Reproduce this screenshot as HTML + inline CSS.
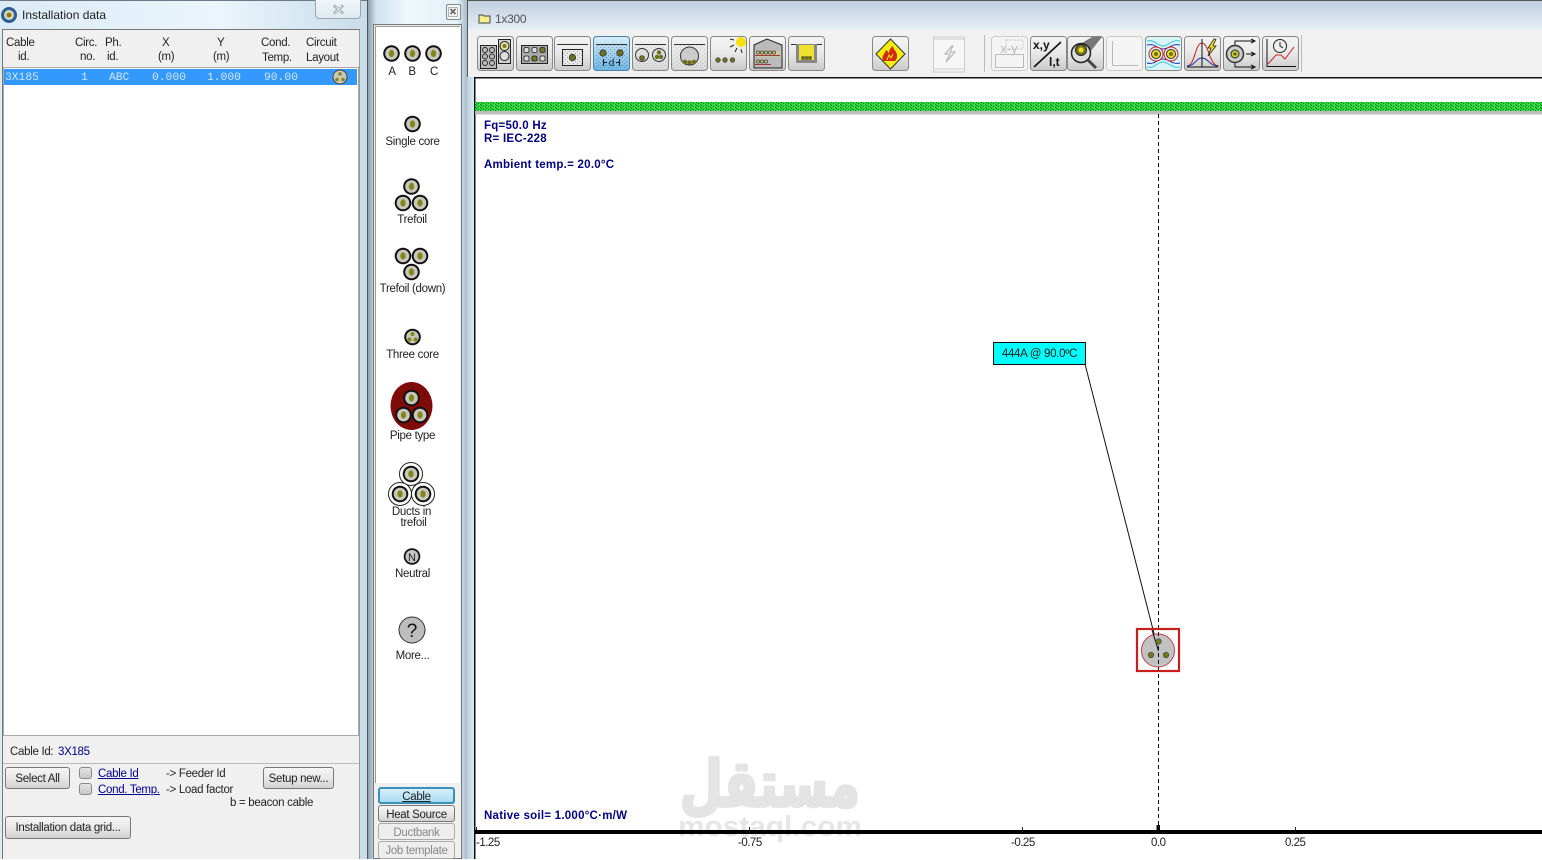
<!DOCTYPE html>
<html><head><meta charset="utf-8"><style>
html,body{margin:0;padding:0}
body{width:1542px;height:859px;overflow:hidden;position:relative;background:#fff;font-family:"Liberation Sans",sans-serif;font-size:11.5px;letter-spacing:-.3px;color:#222}
.a{position:absolute;white-space:nowrap}
.c{text-align:center}
.box{position:absolute;box-sizing:border-box}
.btn{position:absolute;box-sizing:border-box;border:1px solid #777;border-radius:3px;background:linear-gradient(#f6f6f6,#e8e8e8 50%,#d2d2d2);text-align:center;white-space:nowrap}
.cb{position:absolute;box-sizing:border-box;width:13px;height:12px;border:1px solid #888;border-radius:3px;background:linear-gradient(#e4e4e4,#c8c8c8)}
.m{font-family:"Liberation Mono",monospace;font-size:11.3px;letter-spacing:0;color:#cfe6ff}
.lnk{color:#000090;text-decoration:underline}
.b{font-weight:bold;color:#000080;font-size:11.5px;letter-spacing:.25px}
.ax{top:837px;font-size:11.5px;letter-spacing:-.5px;color:#222}
</style></head><body>

<!-- left window -->
<div class="box" style="left:0;top:0;width:367px;height:859px;background:linear-gradient(90deg,#dcebf6,#eaf5fc 60%,#c9dcea)"></div>
<div class="box" style="left:0;top:0;width:367px;height:1px;background:#6b7a88"></div>
<div class="box" style="left:315px;top:-2px;width:46px;height:21px;border:1px solid #9aa6b0;border-radius:0 0 4px 4px;background:linear-gradient(#f2f7fb,#dfe9f1)"></div>
<div class="a" style="left:22px;top:8px;font-size:12px;letter-spacing:0;color:#222">Installation data</div>
<div class="box" style="left:2px;top:29px;width:358px;height:830px;background:#f0f0f0;border-left:1px solid #777;border-top:1px solid #777;border-right:1px solid #999"></div>
<div class="box" style="left:3px;top:67px;width:356px;height:669px;background:#fff;border:1px solid #aaa"></div>
<div class="box" style="left:4px;top:69px;width:353px;height:16px;background:#3399ff"></div>
<div class="box" style="left:3px;top:763px;width:356px;height:1px;background:#bbb"></div>

<div class="a" style="left:6px;top:37px">Cable</div><div class="a" style="left:18px;top:51px">id.</div>
<div class="a" style="left:75px;top:37px">Circ.</div><div class="a" style="left:80px;top:51px">no.</div>
<div class="a" style="left:105px;top:37px">Ph.</div><div class="a" style="left:107px;top:51px">id.</div>
<div class="a" style="left:162px;top:37px">X</div><div class="a" style="left:158px;top:51px">(m)</div>
<div class="a" style="left:217px;top:37px">Y</div><div class="a" style="left:213px;top:51px">(m)</div>
<div class="a" style="left:261px;top:37px">Cond.</div><div class="a" style="left:262px;top:52px">Temp.</div>
<div class="a" style="left:306px;top:37px">Circuit</div><div class="a" style="left:306px;top:52px">Layout</div>

<div class="a m" style="left:5px;top:72px">3X185</div>
<div class="a m" style="left:81px;top:72px">1</div>
<div class="a m" style="left:109px;top:72px">ABC</div>
<div class="a m" style="left:152px;top:72px">0.000</div>
<div class="a m" style="left:207px;top:72px">1.000</div>
<div class="a m" style="left:264px;top:72px">90.00</div>

<div class="a" style="left:10px;top:746px">Cable Id:</div>
<div class="a" style="left:58px;top:746px;color:#000080">3X185</div>
<div class="btn" style="left:5px;top:767px;width:65px;height:22px;line-height:22px">Select All</div>
<div class="cb" style="left:79px;top:767px"></div>
<div class="cb" style="left:79px;top:783px"></div>
<div class="a lnk" style="left:98px;top:768px">Cable Id</div>
<div class="a lnk" style="left:98px;top:784px">Cond. Temp.</div>
<div class="a" style="left:166px;top:768px">-&gt; Feeder Id</div>
<div class="a" style="left:166px;top:784px">-&gt; Load factor</div>
<div class="a" style="left:230px;top:797px">b = beacon cable</div>
<div class="btn" style="left:263px;top:767px;width:71px;height:22px;line-height:22px">Setup new...</div>
<div class="btn" style="left:5px;top:816px;width:126px;height:23px;line-height:23px">Installation data grid...</div>

<!-- middle window -->
<div class="box" style="left:367px;top:0;width:100px;height:859px;background:linear-gradient(90deg,#8fa0ac 0,#cfe2ee 8%,#eef7fc 40%,#e4f1f9 90%,#a9bcc9);border-left:1px solid #555"></div>
<div class="box" style="left:446px;top:4px;width:15px;height:16px;border:1px solid #888;border-radius:2px;background:#f4f4f4"></div>
<div class="box" style="left:373px;top:24px;width:89px;height:835px;background:#f0f0f0;border:1px solid #777"></div>
<div class="box" style="left:375px;top:26px;width:85px;height:757px;background:#fff;border-left:1px solid #999;border-top:1px solid #999"></div>

<div class="a c" style="left:372px;width:40px;top:66px">A</div>
<div class="a c" style="left:392px;width:40px;top:66px">B</div>
<div class="a c" style="left:414px;width:40px;top:66px">C</div>
<div class="a c" style="left:372px;width:81px;top:136px">Single core</div>
<div class="a c" style="left:372px;width:80px;top:214px">Trefoil</div>
<div class="a c" style="left:372px;width:81px;top:283px">Trefoil (down)</div>
<div class="a c" style="left:372px;width:81px;top:349px">Three core</div>
<div class="a c" style="left:372px;width:81px;top:430px">Pipe type</div>
<div class="a c" style="left:371px;width:81px;top:506px">Ducts in</div>
<div class="a c" style="left:373px;width:81px;top:517px">trefoil</div>
<div class="a c" style="left:372px;width:81px;top:568px">Neutral</div>
<div class="a c" style="left:372px;width:81px;top:650px">More...</div>

<div class="btn" style="left:378px;top:787px;width:77px;height:17px;border:2px solid #3a8fb8;line-height:16px;background:linear-gradient(#d6f0fb,#a9dcf4);text-decoration:underline">Cable</div>
<div class="btn" style="left:378px;top:805px;width:77px;height:17px;line-height:18px">Heat Source</div>
<div class="btn" style="left:378px;top:823px;width:77px;height:17px;line-height:18px;color:#888;border-color:#aaa;background:#eee">Ductbank</div>
<div class="btn" style="left:378px;top:841px;width:77px;height:18px;line-height:18px;color:#888;border-color:#aaa;background:#eee">Job template</div>

<!-- main window -->
<div class="box" style="left:467px;top:0;width:1075px;height:30px;background:linear-gradient(#c2cfdf,#e6eef6);border-top:1px solid #555;border-left:1px solid #555"></div>
<div class="box" style="left:467px;top:30px;width:1075px;height:47px;background:#f1f1f1;border-left:1px solid #555"></div>
<div class="box" style="left:467px;top:77px;width:8px;height:782px;background:linear-gradient(90deg,#bcd0de,#dfecf5)"></div>
<div class="a" style="left:495px;top:12px;color:#555;font-size:12px">1x300</div>

<svg class="a" style="left:0;top:0;letter-spacing:0" width="1542" height="859" viewBox="0 0 1542 859">
<defs>
<pattern id="gr" width="5" height="3" patternUnits="userSpaceOnUse"><rect width="5" height="3" fill="#2bd63d"/><rect x="1" y="0" width="1" height="1" fill="#0c7a1c"/><rect x="3" y="1" width="1" height="1" fill="#0c7a1c"/><rect x="0" y="2" width="1" height="1" fill="#0c7a1c"/><rect x="4" y="2" width="1" height="1" fill="#6be870"/></pattern>
<pattern id="sp" width="4" height="4" patternUnits="userSpaceOnUse"><rect width="4" height="4" fill="#e8e8e8"/><rect x="1" y="1" width="1" height="1" fill="#999"/><rect x="3" y="3" width="1" height="1" fill="#aaa"/></pattern>
<pattern id="spb" width="4" height="4" patternUnits="userSpaceOnUse"><rect x="1" y="1" width="1" height="1" fill="#456" opacity=".6"/><rect x="3" y="3" width="1" height="1" fill="#678" opacity=".6"/></pattern>
<linearGradient id="bg" x1="0" y1="0" x2="0" y2="1"><stop offset="0" stop-color="#f4f4f4"/><stop offset=".5" stop-color="#e8e8e8"/><stop offset="1" stop-color="#cacaca"/></linearGradient>
<linearGradient id="bb" x1="0" y1="0" x2="0" y2="1"><stop offset="0" stop-color="#d8eefa"/><stop offset="1" stop-color="#6cb6e4"/></linearGradient>
<g id="cb"><circle r="8.3" fill="#111"/><circle r="6.3" fill="#c8c8bc"/><ellipse rx="2.7" ry="3.6" fill="#85851f"/></g>
<g id="dc"><circle r="11.5" fill="#fff" stroke="#222" stroke-width="1"/><circle r="8.3" fill="#111"/><circle r="6.3" fill="#c8c8bc"/><ellipse rx="2.7" ry="3.6" fill="#85851f"/></g>
<g id="t"><rect x=".5" y=".5" width="36" height="34" rx="3" fill="url(#bg)" stroke="#888"/></g>
<g id="td"><rect x=".5" y=".5" width="36" height="34" rx="3" fill="#f4f4f4" stroke="#ccc"/></g>
<g id="o"><circle r="3.2" fill="#6f6f20" stroke="#333" stroke-width=".8"/></g>
</defs>

<!-- title icon -->
<circle cx="9" cy="15" r="8" fill="#2b5f8f"/><circle cx="9" cy="15" r="5" fill="#d8d8c0"/><circle cx="9" cy="15" r="2.500" fill="#8a7a10"/>
<!-- row layout icon -->
<circle cx="340" cy="77" r="7" fill="#c8c8b4" stroke="#444"/><circle cx="340" cy="74" r="1.7" fill="#85851f"/><circle cx="337" cy="79.5" r="1.7" fill="#85851f"/><circle cx="343" cy="79.5" r="1.7" fill="#85851f"/>
<!-- close X -->
<path d="M334 5.500l9 8M343 5.500l-9 8" stroke="#9aa0a8" stroke-width="2.600" fill="none"/>
<path d="M335 6l7 7M342 6l-7 7" stroke="#eef2f6" stroke-width=".9" fill="none"/>
<path d="M450.500 9l5 5M455.500 9l-5 5" stroke="#666" stroke-width="1.600" fill="none"/><rect x="448.500" y="7.500" width="9" height="9" fill="none" stroke="#999" stroke-width=".7"/>

<!-- palette -->
<use href="#cb" x="391.5" y="53.5"/><use href="#cb" x="412.5" y="53.5"/><use href="#cb" x="433.5" y="53.5"/>
<use href="#cb" x="412.5" y="124"/>
<use href="#cb" x="411.5" y="186.5"/><use href="#cb" x="403" y="203"/><use href="#cb" x="420" y="203"/>
<use href="#cb" x="403" y="256"/><use href="#cb" x="420" y="256"/><use href="#cb" x="411.5" y="272"/>
<circle cx="412.5" cy="337" r="8.3" fill="#111"/><circle cx="412.5" cy="337" r="6.3" fill="#c8c8bc"/><circle cx="412.5" cy="334" r="2" fill="#85851f"/><circle cx="409.5" cy="339.5" r="2" fill="#85851f"/><circle cx="415.5" cy="339.5" r="2" fill="#85851f"/>
<ellipse cx="411.5" cy="406" rx="21" ry="24" fill="#7f0a0a"/>
<use href="#cb" x="411.5" y="398"/><use href="#cb" x="403.5" y="415"/><use href="#cb" x="420" y="415"/>
<use href="#dc" x="411" y="474"/><use href="#dc" x="400" y="494"/><use href="#dc" x="423" y="494"/>
<circle cx="412" cy="556.5" r="8.3" fill="#111"/><circle cx="412" cy="556.5" r="6.5" fill="#c4c4c4"/>
<text x="412" y="561" text-anchor="middle" font-family="Liberation Sans" font-size="11" fill="#222">N</text>
<circle cx="412" cy="630" r="13" fill="#bdbdbd" stroke="#333"/>
<text x="412" y="637" text-anchor="middle" font-family="Liberation Sans" font-size="19" fill="#111">?</text>

<!-- toolbar -->
<g transform="translate(477,36)"><use href="#t"/><rect x="3.500" y="9.500" width="16" height="23" fill="#bbb" stroke="#222"/><g fill="none" stroke="#222" stroke-width=".9"><circle cx="8" cy="14" r="2.500"/><circle cx="15" cy="14" r="2.500"/><circle cx="8" cy="20.500" r="2.500"/><circle cx="15" cy="20.500" r="2.500"/><circle cx="8" cy="27" r="2.500"/><circle cx="15" cy="27" r="2.500"/></g><rect x="21.500" y="3.500" width="12" height="24" fill="#ccc" stroke="#222"/><circle cx="27.500" cy="10" r="4.500" fill="#e8e0a0" stroke="#222"/><circle cx="27.500" cy="10" r="2" fill="#7a7a20"/><circle cx="27.500" cy="20" r="4.500" fill="#ddd" stroke="#222"/></g>
<g transform="translate(516,36)"><use href="#t"/><rect x="5.500" y="9.500" width="26" height="18" fill="#aaa" stroke="#222"/><g fill="#ddd" stroke="#222" stroke-width=".8"><rect x="8" y="11.500" width="5" height="5" rx="1.500"/><rect x="16" y="11.500" width="5" height="5" rx="1.500"/><rect x="24" y="11.500" width="5" height="5" rx="1.500" fill="#7a7a20"/><rect x="8" y="20" width="5" height="5" rx="1.500"/><rect x="16" y="20" width="5" height="5" rx="1.500" fill="#7a7a20"/><rect x="24" y="20" width="5" height="5" rx="1.500"/></g></g>
<g transform="translate(554,36)"><use href="#t"/><path d="M3 8.500h31" stroke="#333"/><rect x="8.500" y="13.500" width="20" height="16" fill="url(#sp)" stroke="#222"/><use href="#o" x="18.500" y="21.500"/></g>
<g transform="translate(593,36)"><rect x=".5" y=".5" width="36" height="34" rx="3" fill="url(#bb)" stroke="#4a7ea5"/><rect x="2" y="9" width="33" height="24" fill="url(#spb)"/><path d="M3 8.500h31" stroke="#333"/><use href="#o" x="10" y="17"/><use href="#o" x="27" y="17"/><path d="M10.500 23v7M26.500 23v7M11 26.500h3M23 26.500h3" stroke="#123" fill="none"/><text x="18.500" y="30" text-anchor="middle" font-family="Liberation Sans" font-size="10" fill="#123">d</text></g>
<g transform="translate(632,36)"><use href="#t"/><rect x="2" y="9" width="33" height="24" fill="url(#sp)" opacity=".5"/><path d="M3 8.500h31" stroke="#333"/><circle cx="10" cy="19" r="6.500" fill="#ddd" stroke="#333"/><circle cx="10" cy="22" r="2.500" fill="#6f6f20" stroke="#333" stroke-width=".6"/><circle cx="27" cy="19" r="6.500" fill="#ddd" stroke="#333"/><circle cx="27" cy="16.500" r="2.200" fill="#6f6f20"/><circle cx="25" cy="21" r="2.200" fill="#6f6f20"/><circle cx="29" cy="21" r="2.200" fill="#6f6f20"/></g>
<g transform="translate(671,36)"><use href="#t"/><rect x="2" y="9" width="33" height="24" fill="url(#sp)" opacity=".5"/><path d="M3 8.500h31" stroke="#333"/><circle cx="18.500" cy="20" r="9" fill="#ccc" stroke="#333"/><circle cx="14" cy="26" r="2.300" fill="#6f6f20"/><circle cx="18.500" cy="26.500" r="2.300" fill="#6f6f20"/><circle cx="23" cy="26" r="2.300" fill="#6f6f20"/></g>
<g transform="translate(710,36)"><use href="#t"/><circle cx="31" cy="6" r="5" fill="#f6e000"/><path d="M24 4l-4-1M24 9l-4 2M27 12l-2 4M31 13l1 4" stroke="#222" fill="none"/><circle cx="8" cy="24" r="2.300" fill="#6f6f20" stroke="#333" stroke-width=".6"/><circle cx="15" cy="24" r="2.300" fill="#6f6f20" stroke="#333" stroke-width=".6"/><circle cx="22.500" cy="24" r="2.300" fill="#6f6f20" stroke="#333" stroke-width=".6"/></g>
<g transform="translate(749,36)"><use href="#t"/><path d="M5 32V9L18 3 33 9V32z" fill="#bbb" stroke="#222"/><rect x="6" y="15" width="26" height="6" fill="#c9c9a0"/><g fill="#c9c9a0" stroke="#553" stroke-width=".9"><circle cx="9" cy="16.500" r="1.600"/><circle cx="13" cy="16.500" r="1.600"/><circle cx="17" cy="16.500" r="1.600"/><circle cx="21" cy="16.500" r="1.600"/><circle cx="25" cy="16.500" r="1.600"/><circle cx="9" cy="25.500" r="1.600"/><circle cx="13" cy="25.500" r="1.600"/><circle cx="17" cy="25.500" r="1.600"/></g><path d="M6 19.500h25M6 28.500h16" stroke="#a33" fill="none"/></g>
<g transform="translate(788,36)"><use href="#t"/><path d="M3 8.500h31" stroke="#333"/><rect x="8" y="8" width="21" height="19" fill="#888"/><rect x="11" y="9" width="15" height="15" fill="#f0e030"/><circle cx="15" cy="22" r="2" fill="#6f6f20"/><circle cx="18.500" cy="22" r="2" fill="#6f6f20"/><circle cx="22" cy="22" r="2" fill="#6f6f20"/></g>

<g transform="translate(872,36)"><use href="#t"/><path d="M18.500 3L33 18 18.500 33 4 18z" fill="#f6ee10" stroke="#333"/><path d="M11 25c-2-5 2-7 3-11 2 1 2 3 3 3 0-3 2-6 4-7 0 3 2 4 3 6 2 4 1 7-1 9z" fill="#d02a10"/><path d="M15 24l2-5 2 3 2-4" stroke="#f6ee10" fill="none"/></g>
<g transform="translate(933,36)"><rect x=".5" y="1" width="31" height="35" fill="#f6f6f6" stroke="#ccc"/><path d="M1 3h30M1 33h30" stroke="#ccc"/><path d="M19 10l-7 8h5l-4 8 9-10h-5l3-6z" fill="none" stroke="#b0b0b0"/></g>
<path d="M984.500 35v37M1301.500 35v37" stroke="#bbb"/>
<g transform="translate(991,36)"><use href="#td"/><rect x="15" y="4" width="17" height="9" fill="none" stroke="#bbb" stroke-dasharray="1.500 1.500"/><rect x="4.500" y="18.500" width="28" height="13" fill="none" stroke="#bbb"/><text x="18" y="17" text-anchor="middle" font-family="Liberation Sans" font-size="13" fill="#bbb">x-y</text></g>
<g transform="translate(1030,36)"><use href="#t"/><path d="M4 31L31 6" stroke="#111" stroke-width="1.600"/><text x="3" y="13" font-family="Liberation Sans" font-weight="bold" font-size="12" fill="#111">x,y</text><text x="19" y="30" font-family="Liberation Sans" font-weight="bold" font-size="12" fill="#111">l,t</text></g>
<g transform="translate(1067,36)"><use href="#t"/><path d="M15 7L25 1h10l-16 20z" fill="#777"/><circle cx="14" cy="17" r="9.500" fill="#ddd" stroke="#222" stroke-width="1.500"/><circle cx="14" cy="14" r="5.500" fill="#77771e" stroke="#222"/><circle cx="14" cy="14" r="2.500" fill="#f0e020"/><path d="M21 24l8 8" stroke="#444" stroke-width="3"/></g>
<g transform="translate(1106,36)"><use href="#td"/><path d="M6.500 5v24.500H32" stroke="#bbb" fill="none"/></g>
<g transform="translate(1145,36)"><rect x=".5" y=".5" width="36" height="34" rx="3" fill="#d8f4f8" stroke="#888"/><path d="M2 5c8-2 10 5 16 5s9-7 17-5M2 31c8 2 10-5 16-5s9 7 17 5" stroke="#3cc8d8" fill="none"/><path d="M2 9c8-2 10 4 16 4s9-6 17-4M2 27c8 2 10-4 16-4s9 6 17 4" stroke="#23a" fill="none"/><circle cx="11" cy="18" r="7" fill="#e8e8e8" stroke="#c22"/><circle cx="26" cy="18" r="7" fill="#e8e8e8" stroke="#c22"/><circle cx="11" cy="18" r="4.500" fill="#e4d820" stroke="#333"/><circle cx="26" cy="18" r="4.500" fill="#e4d820" stroke="#333"/><circle cx="11" cy="18" r="2" fill="#6f6f20"/><circle cx="26" cy="18" r="2" fill="#6f6f20"/></g>
<g transform="translate(1184,36)"><use href="#t"/><path d="M3 30c8 0 8-23 15-23s7 23 17 23" stroke="#c22" fill="none"/><path d="M3 30c8 0 9-8 15-8s8 8 16 8" stroke="#23a" fill="none"/><path d="M18 3v28M3 31h31" stroke="#111" fill="none"/><path d="M30 3l-6 9h3l-3 8 8-10h-3l3-7z" fill="#f0e020" stroke="#222" stroke-width=".8"/></g>
<g transform="translate(1223,36)"><use href="#t"/><circle cx="12" cy="18" r="8.500" fill="#ccc" stroke="#333" stroke-width="1.500"/><circle cx="12" cy="18" r="4" fill="#c8c830" stroke="#333"/><circle cx="12" cy="18" r="1.500" fill="#553"/><path d="M12 9V5h20M12 27v4h20M23 18h9M28 3l4 2-4 2M28 29l4 2-4 2M28 16l4 2-4 2" stroke="#111" fill="none"/></g>
<g transform="translate(1262,36)"><use href="#t"/><path d="M5 3v27.500h29" stroke="#111" fill="none"/><path d="M6 28l8-9h5l4 4 9-12" stroke="#c22" fill="none"/><circle cx="18" cy="10" r="6.500" fill="#eee" stroke="#222"/><path d="M18 6v4l3 2" stroke="#222" fill="none"/></g>

<!-- canvas -->
<rect x="474" y="77" width="1068" height="1.500" fill="#111"/>
<rect x="474" y="77" width="1.500" height="782" fill="#111"/>
<rect x="475" y="102" width="1067" height="9" fill="url(#gr)"/>
<rect x="475" y="111" width="1067" height="3.500" fill="#bdbdbd"/>

<!-- watermark -->
<text x="770" y="806" text-anchor="middle" font-family="DejaVu Sans" font-weight="bold" font-size="64" fill="#e4e4e4" stroke="#e4e4e4" stroke-width="3.500" stroke-linejoin="round" textLength="180" lengthAdjust="spacingAndGlyphs">مستقل</text>
<text x="770" y="836" text-anchor="middle" font-family="Liberation Sans" font-weight="bold" font-size="29" fill="#e6e6e6" textLength="184" lengthAdjust="spacingAndGlyphs">mostaql.com</text>

<path d="M1158.500 114V830" stroke="#111" stroke-dasharray="4 3" fill="none"/>
<path d="M1085 364L1158.500 651" stroke="#111" fill="none"/>
<rect x="993.500" y="342.500" width="92" height="22" fill="#00ffff" stroke="#111"/>
<rect x="1137" y="629" width="42" height="42" fill="none" stroke="#c81e1e" stroke-width="2.200"/>
<circle cx="1158" cy="650.500" r="16.500" fill="#c2c2c2" stroke="#c04050"/>
<path d="M1158.500 632v36" stroke="#111" stroke-dasharray="4 3"/>
<path d="M1152 630L1158.500 651" stroke="#111"/>
<circle cx="1158.500" cy="641.500" r="2.800" fill="#77771e" stroke="#444" stroke-width=".6"/>
<circle cx="1151" cy="655" r="2.800" fill="#77771e" stroke="#444" stroke-width=".6"/>
<circle cx="1166" cy="655" r="2.800" fill="#77771e" stroke="#444" stroke-width=".6"/>

<rect x="475" y="830" width="1067" height="4" fill="#000"/>
<path d="M749.500 827v3M1022.500 827v3M1295.500 827v3M476.500 827v3" stroke="#222"/>
<rect x="1156.500" y="825" width="3.500" height="5" fill="#000"/>
</svg>

<div class="a" style="left:993px;top:348px;width:93px;text-align:center;color:#222">444A @ 90.0ºC</div>
<div class="a b" style="left:484px;top:120px">Fq=50.0 Hz</div>
<div class="a b" style="left:484px;top:133px">R= IEC-228</div>
<div class="a b" style="left:484px;top:159px">Ambient temp.= 20.0°C</div>
<div class="a b" style="left:484px;top:810px">Native soil= 1.000°C·m/W</div>
<div class="a ax" style="left:476px">-1.25</div>
<div class="a ax" style="left:738px">-0.75</div>
<div class="a ax" style="left:1011px">-0.25</div>
<div class="a ax" style="left:1151px">0.0</div>
<div class="a ax" style="left:1285px">0.25</div>

<!-- folder icon -->
<svg class="a" style="left:478px;top:12px" width="13" height="12"><path d="M1 3h4l1 1h6v7H1z" fill="#f4ee8c" stroke="#444"/></svg>
</body></html>
